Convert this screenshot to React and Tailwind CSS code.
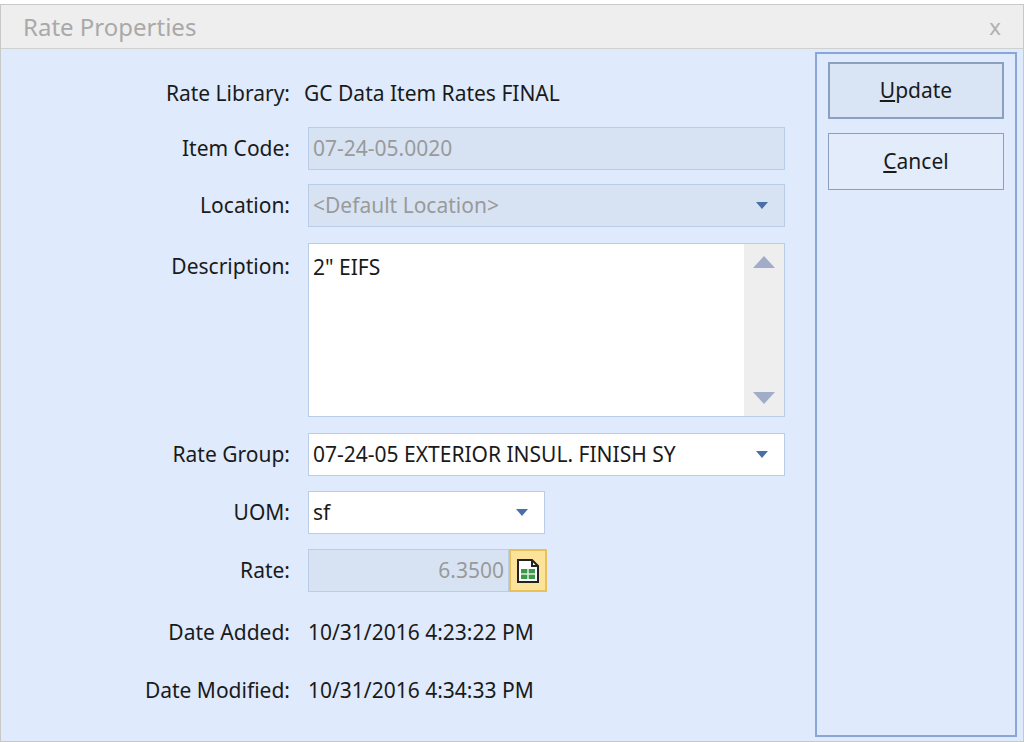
export default function App() {
  const font = { fontFamily: '"Segoe UI", "Noto Sans", "Open Sans", sans-serif' };
  const Label = ({ children }) => (
    <div className="w-[307px] shrink-0 pr-[18px] text-right text-[21px] text-[#1a1a1a]">{children}</div>
  );
  const Arrow = () => (
    <svg width="12" height="7" viewBox="0 0 12 7"><path d="M0 0H12L6 7Z" fill="#4a6fa8" /></svg>
  );
  return (
    <div className="w-[1024px] h-[742px] bg-white overflow-hidden" style={font}>
      <div className="h-[4px] bg-white" />
      <div className="h-[738px] border border-[#c8c8c8] bg-[#dfeafc] flex flex-col">
        <div className="h-[44px] bg-[#eeeeee] border-b border-[#d0d0d0] flex items-center justify-between px-[22px]">
          <span className="text-[24px] text-[#a9a9a9]">Rate Properties</span>
          <span className="text-[22px] text-[#b0b0b0]">x</span>
        </div>
        <div className="flex flex-1 pb-[4px] pr-[6px]">
          <div className="flex-1 flex flex-col pr-[30px] pt-[28px]">
            <div className="flex items-center h-[34px]">
              <Label>Rate Library:</Label>
              <span className="text-[21px] text-[#1a1a1a] -ml-[4px]">GC Data Item Rates FINAL</span>
            </div>
            <div className="flex items-center mt-[16px]">
              <Label>Item Code:</Label>
              <div className="flex-1 h-[43px] bg-[#d7e3f3] border border-[#b9cde8] flex items-center px-[4px] text-[21px] text-[#9a9a9a]">07-24-05.0020</div>
            </div>
            <div className="flex items-center mt-[14px]">
              <Label>Location:</Label>
              <div className="flex-1 h-[43px] bg-[#d7e3f3] border border-[#b9cde8] flex items-center justify-between pl-[4px] pr-[16px] text-[21px] text-[#9a9a9a]">
                <span>&lt;Default Location&gt;</span><Arrow />
              </div>
            </div>
            <div className="flex items-start mt-[16px]">
              <div className="pt-[8px]"><Label>Description:</Label></div>
              <div className="flex-1 h-[174px] bg-white border border-[#b9cde8] flex">
                <div className="flex-1 px-[4px] pt-[8px] text-[21px] text-[#1a1a1a]">2" EIFS</div>
                <div className="w-[40px] bg-[#eeeeee] flex flex-col items-center justify-between py-[12px]">
                  <svg width="22" height="12" viewBox="0 0 22 12"><path d="M0 12H22L11 0Z" fill="#a0acc8" /></svg>
                  <svg width="22" height="12" viewBox="0 0 22 12"><path d="M0 0H22L11 12Z" fill="#a0acc8" /></svg>
                </div>
              </div>
            </div>
            <div className="flex items-center mt-[16px]">
              <Label>Rate Group:</Label>
              <div className="flex-1 h-[43px] bg-white border border-[#b9cde8] flex items-center justify-between pl-[4px] pr-[16px] text-[21px] text-[#1a1a1a]">
                <span className="whitespace-nowrap overflow-hidden">07-24-05 EXTERIOR INSUL. FINISH SY</span><Arrow />
              </div>
            </div>
            <div className="flex items-center mt-[15px]">
              <Label>UOM:</Label>
              <div className="w-[237px] h-[43px] bg-white border border-[#b9cde8] flex items-center justify-between pl-[4px] pr-[16px] text-[21px] text-[#1a1a1a]">
                <span>sf</span><Arrow />
              </div>
            </div>
            <div className="flex items-center mt-[15px]">
              <Label>Rate:</Label>
              <div className="w-[201px] h-[43px] bg-[#d7e3f3] border border-[#b9cde8] flex items-center justify-end px-[4px] text-[21px] text-[#9a9a9a]">6.3500</div>
              <div className="w-[38px] h-[43px] bg-[#fbe39a] border-2 border-[#e8c15a] flex items-center justify-center">
                <svg width="22" height="24" viewBox="0 0 22 24">
                  <path d="M1 1H15L21 7V23H1Z" fill="#fff" stroke="#222" strokeWidth="2" />
                  <path d="M15 1V7H21" fill="none" stroke="#222" strokeWidth="2" />
                  <rect x="4" y="10" width="14" height="10" fill="#3b9a4a" />
                  <path d="M4 15H18M11 10V20" stroke="#dff0de" strokeWidth="1.5" />
                </svg>
              </div>
            </div>
            <div className="flex items-center mt-[24px] h-[34px]">
              <Label>Date Added:</Label>
              <span className="text-[21px] text-[#1a1a1a]">10/31/2016 4:23:22 PM</span>
            </div>
            <div className="flex items-center mt-[24px] h-[34px]">
              <Label>Date Modified:</Label>
              <span className="text-[21px] text-[#1a1a1a]">10/31/2016 4:34:33 PM</span>
            </div>
          </div>
          <div className="w-[202px] mt-[3px] border-2 border-[#8aa6d6] flex flex-col items-center pt-[8px] gap-[14px]">
            <button className="w-[176px] h-[57px] bg-[#d9e5f5] border-2 border-[#8ba0c0] text-[21px] text-[#1a1a1a]"><span className="underline">U</span>pdate</button>
            <button className="w-[176px] h-[57px] bg-[#e2ecfa] border border-[#8ba0c0] text-[21px] text-[#1a1a1a]"><span className="underline">C</span>ancel</button>
          </div>
        </div>
      </div>
    </div>
  );
}
